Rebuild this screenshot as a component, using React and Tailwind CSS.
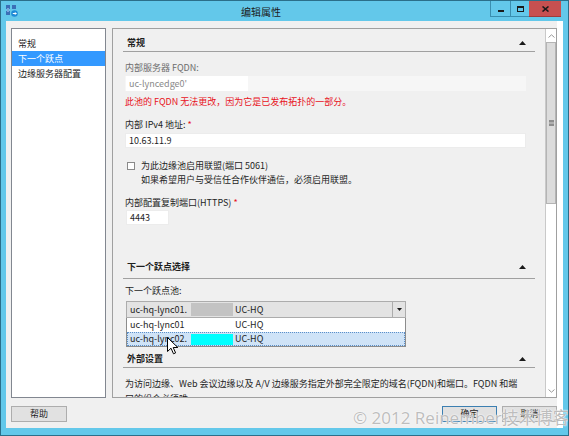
import React from 'react';

const Tri = () => (
  <svg width="7" height="4" viewBox="0 0 7 4" className="block">
    <path d="M0 4 L3.5 0 L7 4 Z" fill="#1a1a1a" />
  </svg>
);

const SectionHeader = ({ title, className }) => (
  <div className={`mx-[10px] flex items-center justify-between border-b border-[#a0a0a0] ${className}`}>
    <span className="pl-[4px] font-bold leading-[15px]">{title}</span>
    <span className="pr-[9px]"><Tri /></span>
  </div>
);

const TitleBar = () => (
  <div className="h-[20px] flex items-start">
    <div className="pl-[5px] pt-[4px]">
      <svg width="12" height="12" viewBox="0 0 12 12" className="block">
        <rect x="0" y="0" width="4" height="4" fill="#3b6fb6" />
        <rect x="6" y="0" width="4" height="4" fill="#3b6fb6" />
        <rect x="0" y="6" width="4" height="4" fill="#3b6fb6" />
        <rect x="1" y="3" width="2" height="4" fill="#7aa7de" />
        <circle cx="8.5" cy="8.5" r="3.3" fill="#1e8ad6" />
        <path d="M6.8 8.5 L10.2 8.5 M9 7.3 L10.2 8.5 L9 9.7" stroke="#ffffff" strokeWidth="1" fill="none" />
      </svg>
    </div>
    <div className="flex-1 text-center pl-[14px] pt-[3px] text-[10px] leading-[15px] text-[#1b1b1b]">编辑属性</div>
    <div className="flex mr-[7px]">
      <div className="w-[20px] h-[16px] border-l border-b border-[#3a8fb0] flex items-end justify-center pb-[4px]">
        <div className="w-[6px] h-[2px] bg-[#1b1b1b]" />
      </div>
      <div className="w-[19px] h-[16px] border-l border-b border-[#3a8fb0] flex items-center justify-center">
        <div className="w-[7px] h-[6px] border border-t-2 border-[#1b1b1b]" />
      </div>
      <div className="w-[32px] h-[16px] bg-[#c75050] border-b border-[#9e3b3b] flex items-center justify-center">
        <svg width="7" height="6" viewBox="0 0 7 6" className="block">
          <path d="M0.5 0.5 L6.5 5.5 M6.5 0.5 L0.5 5.5" stroke="#1b1b1b" strokeWidth="1.6" />
        </svg>
      </div>
    </div>
  </div>
);

const LeftList = () => (
  <div className="w-[95px] h-full bg-white border border-[#828790] pt-[7px]">
    <div className="h-[15px] leading-[15px] pl-[6px]">常规</div>
    <div className="h-[15px] leading-[15px] pl-[6px] bg-[#3399ff] text-white">下一个跃点</div>
    <div className="h-[15px] leading-[15px] pl-[6px]">边缘服务器配置</div>
  </div>
);

const ScrollBar = () => (
  <div className="w-[11px] h-full flex flex-col border-l border-[#c9c9c9] bg-[#f7f7f7]">
    <div className="h-[13px] flex items-center justify-center bg-white">
      <svg width="7" height="4" viewBox="0 0 7 4" className="block">
        <path d="M0.5 3.5 L3.5 0.8 L6.5 3.5" stroke="#9a9a9a" fill="none" />
      </svg>
    </div>
    <div className="h-[162px] bg-[#dcdcdc] border border-[#b4b4b4] flex items-center justify-center">
      <div className="w-[5px] h-[6px] border-y-2 border-[#8e8e8e] bg-[#b0b0b0]" />
    </div>
    <div className="flex-1 bg-white" />
    <div className="h-[12px] flex items-center justify-center bg-white">
      <svg width="7" height="4" viewBox="0 0 7 4" className="block">
        <path d="M0.5 0.5 L3.5 3.2 L6.5 0.5" stroke="#9a9a9a" fill="none" />
      </svg>
    </div>
  </div>
);

const Content = () => (
  <div className="flex-1 h-full overflow-hidden">
    <SectionHeader title="常规" className="pt-[6px] pb-[1px]" />
    <div className="pl-[12px] pr-[19px]">
      <div className="mt-[8px] leading-[15px] text-[#6d6d6d]">内部服务器 FQDN:</div>
      <div className="mt-[1px] h-[15px] bg-[#f6f6f6] flex items-center">
        <div className="ml-[1px] w-[122px] h-full bg-white pl-[3px] leading-[15px] text-[#8a8a8a]">uc-lyncedge0'</div>
      </div>
      <div className="mt-[3px] leading-[15px] text-[#e8121c]">此池的 FQDN 无法更改，因为它是已发布拓扑的一部分。</div>
      <div className="mt-[8px] leading-[15px]">内部 IPv4 地址: <span className="text-[#e8121c]">*</span></div>
      <div className="mt-[1px] h-[15px] bg-white border border-[#ececec] pl-[3px] leading-[13px]">10.63.11.9</div>
      <div className="mt-[11px] flex">
        <div className="ml-[2px] mt-[3px] w-[8px] h-[8px] bg-white border border-[#8a8a8a]" />
        <div className="ml-[6px]">
          <div className="leading-[14px]">为此边缘池启用联盟(端口 5061)</div>
          <div className="leading-[14px]">如果希望用户与受信任合作伙伴通信，必须启用联盟。</div>
        </div>
      </div>
      <div className="mt-[8px] leading-[15px]">内部配置复制端口(HTTPS) <span className="text-[#e8121c]">*</span></div>
      <div className="ml-[1px] w-[43px] h-[15px] bg-white border border-[#ececec] pl-[3px] leading-[13px]">4443</div>
    </div>
    <SectionHeader title="下一个跃点选择" className="mt-[34px] pb-[4px]" />
    <div className="pl-[12px]">
      <div className="mt-[4px] leading-[15px]">下一个跃点池:</div>
      <div className="ml-[1px] mt-[3px] w-[280px] h-[17px] bg-[#e3e3e3] border border-[#acacac] flex items-center">
        <div className="w-[64px] pl-[3px] leading-[15px]">uc-hq-lync01.</div>
        <div className="w-[42px] h-[13px] bg-[#c3c3c3]" />
        <div className="flex-1 pl-[2px] leading-[15px]">UC-HQ</div>
        <div className="w-[13px] h-full border-l border-[#acacac] flex items-center justify-center">
          <svg width="5" height="3" viewBox="0 0 5 3" className="block">
            <path d="M0 0 L5 0 L2.5 3 Z" fill="#1a1a1a" />
          </svg>
        </div>
      </div>
      <div className="ml-[1px] w-[280px] bg-white border border-t-0 border-[#8c8c8c]">
        <div className="h-[14px] flex items-center">
          <div className="w-[106px] pl-[3px] leading-[14px]">uc-hq-lync01</div>
          <div className="pl-[2px] leading-[14px]">UC-HQ</div>
        </div>
        <div className="h-[14px] flex items-center bg-[#cfe3f7] border border-dotted border-[#5b8fc9]">
          <div className="w-[63px] pl-[2px] leading-[12px]">uc-hq-lync02.</div>
          <div className="w-[42px] h-[11px] bg-[#00ffff]" />
          <div className="pl-[2px] leading-[12px]">UC-HQ</div>
        </div>
      </div>
    </div>
    <SectionHeader title="外部设置" className="mt-[4px] pb-[1px]" />
    <div className="pl-[12px]">
      <div className="mt-[8px] leading-[15px] whitespace-nowrap">为访问边缘、Web 会议边缘以及 A/V 边缘服务指定外部完全限定的域名(FQDN)和端口。FQDN 和端</div>
      <div className="leading-[15px] whitespace-nowrap">口的组合必须唯一。</div>
    </div>
  </div>
);

const Btn = ({ children, primary, className }) => (
  <div className={`h-[16px] bg-[#e1e1e1] border flex items-center justify-center leading-[14px] ${primary ? 'border-[#3c7fb1]' : 'border-[#adadad]'} ${className}`}>
    {children}
  </div>
);

const Cursor = () => (
  <svg width="12" height="18" viewBox="0 0 12 18" className="absolute left-[166px] top-[336px]">
    <path d="M0.5 0.5 L0.5 14.5 L4 11.2 L6.5 16.8 L8.6 15.9 L6.2 10.5 L10.8 10.5 Z" fill="#ffffff" stroke="#000000" strokeWidth="1" strokeLinejoin="round" />
  </svg>
);

export default function App() {
  return (
    <div className="relative w-[569px] h-[436px] bg-[#63c8ea] border border-[#2b6f8a] flex flex-col font-['Noto_Sans_CJK_SC','Noto_Sans',sans-serif] text-[9px] text-[#1e1e1e] overflow-hidden select-none">
      <TitleBar />
      <div className="mx-[5px] mb-[7px] flex-1 bg-[#f0f0f0] border-r-[6px] border-white pl-[5px] pt-[7px] flex flex-col">
        <div className="h-[370px] flex gap-[6px]">
          <LeftList />
          <div className="flex-1 h-full border border-[#a0a0a0] bg-[#f0f0f0] flex">
            <Content />
            <ScrollBar />
          </div>
        </div>
        <div className="mt-[8px] flex">
          <Btn className="w-[56px]">帮助</Btn>
          <div className="flex-1" />
          <Btn primary className="w-[55px]">确定</Btn>
          <Btn className="w-[55px] ml-[5px]">取消</Btn>
        </div>
      </div>
      <Cursor />
      <div className="absolute left-[352px] top-[405px] text-[17px] leading-[24px] whitespace-nowrap text-[#bdbdbd] font-['Open_Sans','Noto_Sans_CJK_SC',sans-serif] [text-shadow:0_0_2px_#ffffff,0_0_1px_#ffffff]">
        © 2012 Reinember技术博客
      </div>
    </div>
  );
}
